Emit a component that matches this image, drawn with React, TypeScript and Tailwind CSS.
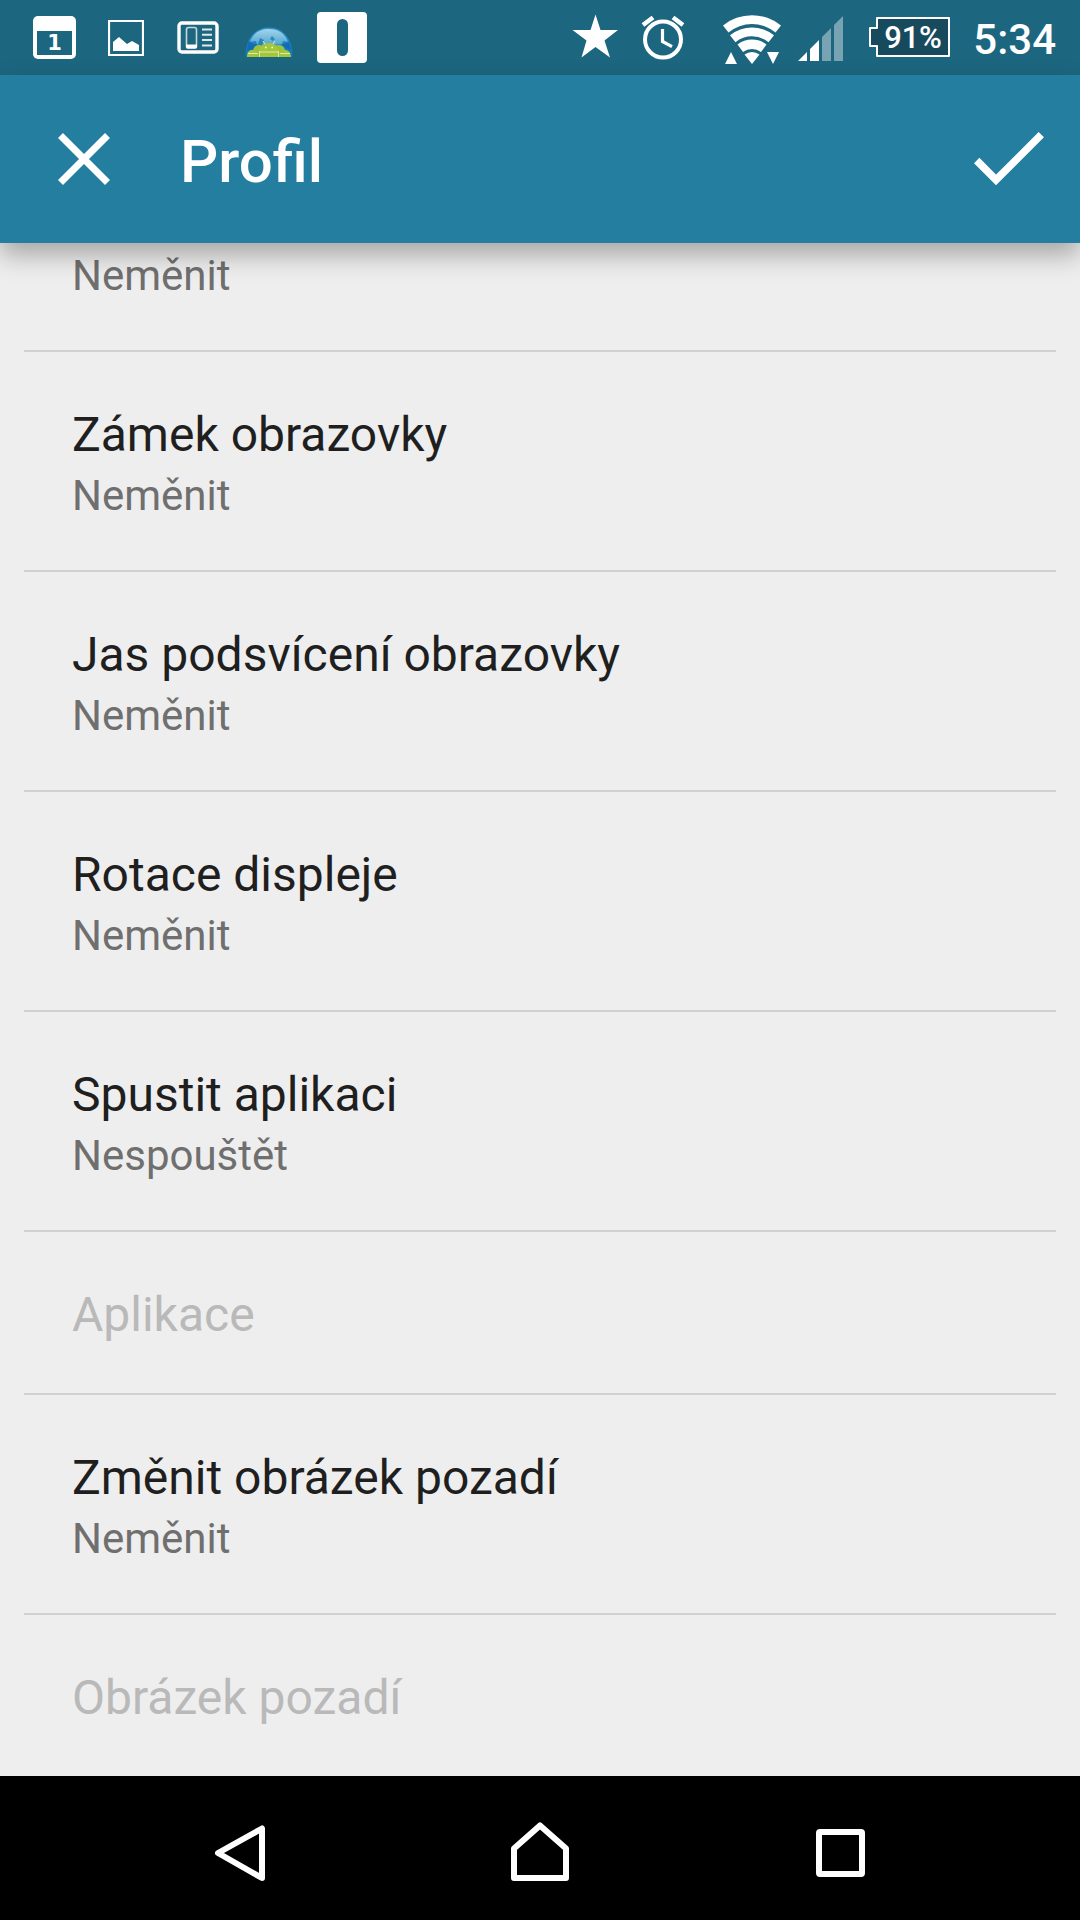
import React from 'react';

interface Preference {
  title?: string;
  summary?: string;
  disabled?: boolean;
}

const PREFERENCES: Preference[] = [
  { title: 'Zámek obrazovky', summary: 'Neměnit' },
  { title: 'Jas podsvícení obrazovky', summary: 'Neměnit' },
  { title: 'Rotace displeje', summary: 'Neměnit' },
  { title: 'Spustit aplikaci', summary: 'Nespouštět' },
  { title: 'Aplikace', disabled: true },
  { title: 'Změnit obrázek pozadí', summary: 'Neměnit' },
  { title: 'Obrázek pozadí', disabled: true },
];

const NotificationIcons: React.FC = () => (
  <div className="flex items-center">
    {/* Calendar */}
    <div className="w-[43px] h-[43px] rounded-[5px] bg-white px-1 pt-[15px] pb-1">
      <div className="h-6 bg-[#1d667f] flex items-center justify-center">
        <span className="font-['DejaVu_Sans'] font-bold text-[21px] leading-6 text-white">1</span>
      </div>
    </div>

    {/* Picture */}
    <svg className="ml-8 w-9 h-9" viewBox="0 0 36 36" fill="none">
      <path d="M1 1h34v34H1z" stroke="white" strokeWidth="2.2" />
      <path d="M5 31v-9l6-5 8 7 5-3 7 4v6z" fill="white" />
    </svg>

    {/* Phone with text lines */}
    <svg className="ml-[33px] w-[42px] h-[33px]" viewBox="0 0 42 33" fill="none">
      <rect x="2" y="2" width="38" height="29" rx="3" stroke="white" strokeWidth="3.4" />
      <rect x="9.5" y="6.5" width="10" height="20.5" rx="2" stroke="white" strokeOpacity="0.75" strokeWidth="1.6" />
      <path d="M9 23.500h11v2.500a1.500 1.500 0 0 1-1.500 1.500h-8a1.500 1.500 0 0 1-1.500-1.500z" fill="white" />
      <path d="M25 8.500h10M25 13.800h10M25 19h10M25 24.500h10" stroke="white" strokeOpacity="0.85" strokeWidth="2" />
    </svg>

    {/* Globe with androids */}
    <svg className="ml-[26px] mt-[9px] w-12 h-[31px]" viewBox="0 0 48 31">
      <defs>
        <linearGradient id="globe" x1="0" y1="0" x2="0" y2="1">
          <stop offset="0" stopColor="#2b94cb" />
          <stop offset="1" stopColor="#1173bc" />
        </linearGradient>
        <linearGradient id="gloss" x1="0" y1="0" x2="0" y2="1">
          <stop offset="0" stopColor="#a4d3e8" />
          <stop offset="1" stopColor="#4ea8d5" />
        </linearGradient>
      </defs>
      <path d="M.500 30C0 12 10 .500 24 .500S48 12 47.500 30z" fill="url(#globe)" />
      <path d="M5 15C8 6 15 2 24 2s16 4 19 13c-4 4-34 4-38 0z" fill="url(#gloss)" />
      <path d="M3 15l8-1 1 4-4 4-6 2zM38 14l6 1 2 8-5-2-4-3zM15 11l4 2-2 5-4-1zM27 9l3 3-2 2-3-2z" fill="#0c5fae" opacity="0.6" />
      <path d="M8 30v-5c0-4 2-7 6-7s6 3 6 7v5zM28 30v-5c0-4 2-7 6-7s6 3 6 7v5z" fill="#9cc23c" />
      <path d="M2 30c0-5 2-7 5-7s6 2 6 7zM35 30c0-5 2-7 5-7s6 2 6 7z" fill="#a4c639" />
      <path d="M14.500 30v-6c0-5 4-8 9.500-8s9.500 3 9.500 8v6z" fill="#a4c639" />
      <path d="M14.500 24v6M33.500 24v6M14.500 25h19M3 26.500h10M35 26.500h10M18 14l2 3M30 14l-2 3" stroke="#e3eec0" strokeWidth="0.9" />
      <path d="M20 20.500h1.500M26.500 20.500H28" stroke="white" strokeWidth="1.500" />
    </svg>

    {/* White tile */}
    <div className="ml-6 w-[50px] h-[51px] rounded-[4px] bg-white flex items-center justify-center">
      <div className="w-[11px] h-[37px] rounded-full bg-[#1d667f]" />
    </div>
  </div>
);

const SystemIcons: React.FC = () => (
  <div className="flex items-center">
    <svg className="w-[46px] h-[75px]" viewBox="572 0 46 75" fill="white">
      <path d="M595.500 14.500l5 15.500h17.500l-13.500 10.500 5.500 17-14.500-10.500-14 10.500 5-17-14-10.500h18z" />
    </svg>

    <svg className="ml-[23px] w-[44px] h-[75px]" viewBox="641 0 44 75" fill="none" stroke="white">
      <circle cx="663" cy="39.500" r="18" strokeWidth="4" />
      <path d="M662.500 29v12.500l9.500 5.200" strokeWidth="3.200" />
      <path d="M643 25l10-7.500M683 25l-10-7.500" strokeWidth="4.500" />
    </svg>

    {/* Wifi */}
    <svg className="ml-[38px] w-[58px] h-[75px]" viewBox="723 0 58 75" fill="white">
      <path d="M723 25.500a46 46 0 0 1 58 0l-5.500 7a37 37 0 0 0-47 0z" />
      <path d="M730 35.200a35 35 0 0 1 44 0l-5.500 7a26 26 0 0 0-33 0z" />
      <path d="M737.500 44.500a23.500 23.500 0 0 1 29 0l-5.500 7.500a15 15 0 0 0-18 0z" />
      <path d="M744.500 54.500a12.500 12.500 0 0 1 15 0l-7.500 9.500z" />
      <path d="M725 64h12l-6-12zM767 52h12l-6 12z" />
    </svg>

    {/* Signal */}
    <svg className="ml-[17px] w-[45px] h-[75px]" viewBox="798 0 45 75" fill="white">
      <path d="M798 61l9-9v9zM810 61V49l9-9v21z" />
      <path d="M822 61V37l9-9v33zM834 61V25l9-9v45z" fillOpacity="0.4" />
    </svg>

    {/* Battery */}
    <div className="relative ml-[26px] w-[81px] h-[75px]">
      <svg className="w-[81px] h-[75px]" viewBox="869 0 81 75">
        <path d="M877 18h72v38h-72v-10h-7V28h7z" fill="#184a5d" stroke="white" strokeWidth="2" strokeLinejoin="round" />
      </svg>
      <span className="absolute left-[15px] top-[21px] font-medium text-[31px] leading-[34px] tracking-[-0.3px]">91%</span>
    </div>

    <span className="ml-[23px] pt-1 font-medium text-[42px] leading-[71px]">5:34</span>
  </div>
);

const PreferenceRow: React.FC<Preference> = ({ title, summary, disabled }) => (
  <li className={`mx-6 px-12 pt-[49px] border-b-2 border-[#d1d1d1] last:border-b-0 ${disabled ? 'pb-11' : 'pb-[47px]'}`}>
    <div className={`text-[48px] leading-[68px] ${disabled ? 'text-[#b9b9b9]' : 'text-[#1f1f1f]'}`}>{title}</div>
    {summary && <div className="text-[42px] leading-[54px] text-[#6f6f6f]">{summary}</div>}
  </li>
);

export default function App() {
  return (
    <div className="w-[1080px] h-[1920px] flex flex-col overflow-hidden bg-[#eeeeee] font-[Roboto,sans-serif]">
      <div className="h-[75px] shrink-0 flex items-center justify-between pl-[33px] pr-6 bg-[#1d667f] text-white">
        <NotificationIcons />
        <SystemIcons />
      </div>

      <header className="relative z-10 h-[168px] shrink-0 flex items-center bg-[#247ea0] text-white shadow-[0_12px_24px_rgba(0,0,0,0.3)]">
        <svg className="ml-[58px] w-[52px] h-[52px]" viewBox="0 0 52 52" stroke="white" strokeWidth="7">
          <path d="M2.500 2.500l47 47M49.500 2.500l-47 47" />
        </svg>
        <h1 className="ml-[70px] pt-[5px] text-[60px] leading-[72px] font-medium">Profil</h1>
        <svg className="ml-auto mr-9 w-[70px] h-[54px]" viewBox="0 0 70 54" fill="none" stroke="white" strokeWidth="7.500">
          <path d="M2.700 28.500L22 48 67.300 2.700" />
        </svg>
      </header>

      <main className="h-[1533px] shrink-0 overflow-hidden">
        <div className="mx-6 px-12 h-[109px] pt-1.5 border-b-2 border-[#d1d1d1] text-[42px] leading-[54px] text-[#6f6f6f]">
          Neměnit
        </div>
        <ul>
          {PREFERENCES.map((item) => (
            <PreferenceRow key={item.title} {...item} />
          ))}
        </ul>
      </main>

      <nav className="h-36 shrink-0 flex items-center pt-2.5 bg-black">
        <svg className="ml-[214px] w-[52px] h-[58px]" viewBox="0 0 52 58" fill="none" stroke="white" strokeWidth="6" strokeLinejoin="round">
          <path d="M48 4.500v49.500L4 29z" />
        </svg>
        <svg className="ml-[244px] w-[60px] h-[60px] overflow-visible" viewBox="0 0 60 60" fill="none" stroke="white" strokeWidth="6" strokeLinejoin="round">
          <path d="M4 55V25.500L30 2.500l26 23V55z" />
        </svg>
        <div className="ml-[246px] w-[49px] h-12 border-6 border-white rounded-[4px]" />
      </nav>
    </div>
  );
}
